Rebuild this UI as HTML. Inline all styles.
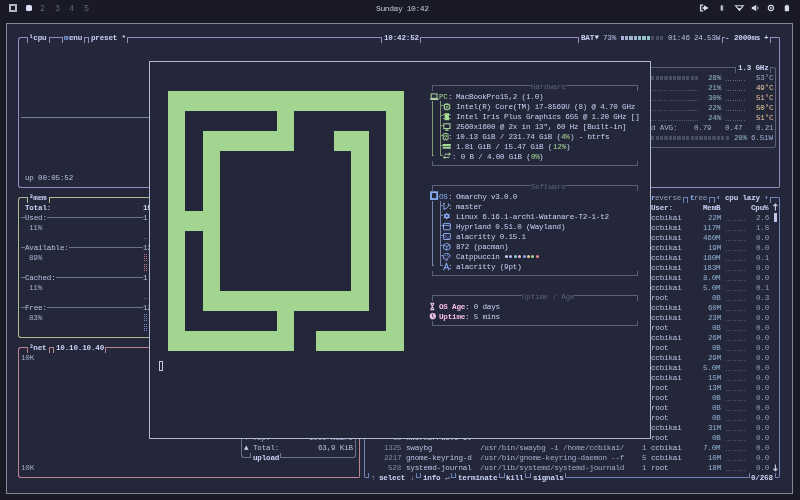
<!DOCTYPE html>
<html><head><meta charset="utf-8"><style>
html,body{margin:0;padding:0;}
body{-webkit-font-smoothing:antialiased;width:800px;height:500px;overflow:hidden;position:relative;background:#191a25;font-family:"Liberation Mono",monospace;}
.r,.h,.v,.t,.ic{position:absolute;}
.h{height:1px;}
.v{width:1px;}
.t{white-space:pre;will-change:transform;font-size:7.60px;line-height:10px;height:10px;letter-spacing:-0.186px;}
.b{font-weight:bold;}
</style></head><body>
<div class="r" style="left:9.00px;top:3.80px;width:8.20px;height:8.20px;background:transparent;box-sizing:border-box;border:2px solid #b4b6c4;"></div>
<div class="r" style="left:25.80px;top:4.90px;width:6.20px;height:6.00px;background:#dcdff5;border-radius:1.6px;"></div>
<div class="t" style="left:40.40px;top:3.6px;font-size:8.4px;color:#62667c">2</div>
<div class="t" style="left:54.90px;top:3.6px;font-size:8.4px;color:#62667c">3</div>
<div class="t" style="left:69.40px;top:3.6px;font-size:8.4px;color:#62667c">4</div>
<div class="t" style="left:83.90px;top:3.6px;font-size:8.4px;color:#62667c">5</div>
<div class="t" style="left:376.2px;top:3.6px;font-size:8px;letter-spacing:-0.425px;color:#c8ccdc">Sunday 10:42</div>
<div class="r" style="left:6.00px;top:23.00px;width:787.00px;height:471.00px;background:#24273a;box-sizing:border-box;border:1px solid #85879a;"></div>
<div class="r" style="box-sizing:border-box;left:17.99px;top:37.00px;width:2.69px;height:5.50px;border-left:1px solid #9a8cc2;border-top:1px solid #9a8cc2;border-top-left-radius:3px"></div>
<div class="r" style="box-sizing:border-box;left:777.55px;top:37.00px;width:2.69px;height:5.50px;border-right:1px solid #9a8cc2;border-top:1px solid #9a8cc2;border-top-right-radius:3px"></div>
<div class="r" style="box-sizing:border-box;left:17.99px;top:182.50px;width:2.69px;height:5.50px;border-left:1px solid #9a8cc2;border-bottom:1px solid #9a8cc2;border-bottom-left-radius:3px"></div>
<div class="r" style="box-sizing:border-box;left:777.55px;top:182.50px;width:2.69px;height:5.50px;border-right:1px solid #9a8cc2;border-bottom:1px solid #9a8cc2;border-bottom-right-radius:3px"></div>
<div class="r" style="box-sizing:border-box;left:455.49px;top:67.00px;width:2.69px;height:5.50px;border-left:1px solid #5b6078;border-top:1px solid #5b6078;border-top-left-radius:3px"></div>
<div class="r" style="box-sizing:border-box;left:773.17px;top:67.00px;width:2.69px;height:5.50px;border-right:1px solid #5b6078;border-top:1px solid #5b6078;border-top-right-radius:3px"></div>
<div class="r" style="box-sizing:border-box;left:455.49px;top:142.50px;width:2.69px;height:5.50px;border-left:1px solid #5b6078;border-bottom:1px solid #5b6078;border-bottom-left-radius:3px"></div>
<div class="r" style="box-sizing:border-box;left:773.17px;top:142.50px;width:2.69px;height:5.50px;border-right:1px solid #5b6078;border-bottom:1px solid #5b6078;border-bottom-right-radius:3px"></div>
<div class="r" style="box-sizing:border-box;left:17.99px;top:197.00px;width:2.69px;height:5.50px;border-left:1px solid #abba8f;border-top:1px solid #abba8f;border-top-left-radius:3px"></div>
<div class="r" style="box-sizing:border-box;left:191.30px;top:197.00px;width:2.69px;height:5.50px;border-right:1px solid #abba8f;border-top:1px solid #abba8f;border-top-right-radius:3px"></div>
<div class="r" style="box-sizing:border-box;left:17.99px;top:332.50px;width:2.69px;height:5.50px;border-left:1px solid #abba8f;border-bottom:1px solid #abba8f;border-bottom-left-radius:3px"></div>
<div class="r" style="box-sizing:border-box;left:191.30px;top:332.50px;width:2.69px;height:5.50px;border-right:1px solid #abba8f;border-bottom:1px solid #abba8f;border-bottom-right-radius:3px"></div>
<div class="r" style="box-sizing:border-box;left:17.99px;top:347.00px;width:2.69px;height:5.50px;border-left:1px solid #bd8592;border-top:1px solid #bd8592;border-top-left-radius:3px"></div>
<div class="r" style="box-sizing:border-box;left:357.55px;top:347.00px;width:2.69px;height:5.50px;border-right:1px solid #bd8592;border-top:1px solid #bd8592;border-top-right-radius:3px"></div>
<div class="r" style="box-sizing:border-box;left:17.99px;top:472.50px;width:2.69px;height:5.50px;border-left:1px solid #bd8592;border-bottom:1px solid #bd8592;border-bottom-left-radius:3px"></div>
<div class="r" style="box-sizing:border-box;left:357.55px;top:472.50px;width:2.69px;height:5.50px;border-right:1px solid #bd8592;border-bottom:1px solid #bd8592;border-bottom-right-radius:3px"></div>
<div class="r" style="box-sizing:border-box;left:241.11px;top:377.00px;width:2.69px;height:5.50px;border-left:1px solid #6e738d;border-top:1px solid #6e738d;border-top-left-radius:3px"></div>
<div class="r" style="box-sizing:border-box;left:353.18px;top:377.00px;width:2.69px;height:5.50px;border-right:1px solid #6e738d;border-top:1px solid #6e738d;border-top-right-radius:3px"></div>
<div class="r" style="box-sizing:border-box;left:241.11px;top:452.50px;width:2.69px;height:5.50px;border-left:1px solid #6e738d;border-bottom:1px solid #6e738d;border-bottom-left-radius:3px"></div>
<div class="r" style="box-sizing:border-box;left:353.18px;top:452.50px;width:2.69px;height:5.50px;border-right:1px solid #6e738d;border-bottom:1px solid #6e738d;border-bottom-right-radius:3px"></div>
<div class="r" style="box-sizing:border-box;left:363.61px;top:197.00px;width:2.69px;height:5.50px;border-left:1px solid #6f84bb;border-top:1px solid #6f84bb;border-top-left-radius:3px"></div>
<div class="r" style="box-sizing:border-box;left:777.55px;top:197.00px;width:2.69px;height:5.50px;border-right:1px solid #6f84bb;border-top:1px solid #6f84bb;border-top-right-radius:3px"></div>
<div class="r" style="box-sizing:border-box;left:363.61px;top:472.50px;width:2.69px;height:5.50px;border-left:1px solid #6f84bb;border-bottom:1px solid #6f84bb;border-bottom-left-radius:3px"></div>
<div class="r" style="box-sizing:border-box;left:777.55px;top:472.50px;width:2.69px;height:5.50px;border-right:1px solid #6f84bb;border-bottom:1px solid #6f84bb;border-bottom-right-radius:3px"></div>
<div class="h" style="left:20.68px;top:37.00px;width:7.06px;background:#9a8cc2"></div>
<div class="h" style="left:48.61px;top:37.00px;width:14.12px;background:#9a8cc2"></div>
<div class="h" style="left:83.61px;top:37.00px;width:5.38px;background:#9a8cc2"></div>
<div class="h" style="left:127.36px;top:37.00px;width:254.75px;background:#9a8cc2"></div>
<div class="h" style="left:420.49px;top:37.00px;width:158.50px;background:#9a8cc2"></div>
<div class="h" style="left:722.36px;top:37.00px;width:2.69px;background:#9a8cc2"></div>
<div class="h" style="left:770.49px;top:37.00px;width:7.06px;background:#9a8cc2"></div>
<div class="h" style="left:20.68px;top:187.00px;width:756.88px;background:#9a8cc2"></div>
<div class="h" style="left:20.68px;top:117.00px;width:175.00px;background:#7a7f9a"></div>
<div class="h" style="left:458.18px;top:67.00px;width:278.31px;background:#5b6078"></div>
<div class="h" style="left:770.49px;top:67.00px;width:2.69px;background:#5b6078"></div>
<div class="h" style="left:458.18px;top:147.00px;width:315.00px;background:#5b6078"></div>
<div class="h" style="left:20.68px;top:197.00px;width:7.06px;background:#abba8f"></div>
<div class="h" style="left:48.61px;top:197.00px;width:142.69px;background:#abba8f"></div>
<div class="h" style="left:20.68px;top:337.00px;width:170.62px;background:#abba8f"></div>
<div class="h" style="left:20.68px;top:217.00px;width:4.38px;background:#6e738d"></div>
<div class="h" style="left:46.92px;top:217.00px;width:96.25px;background:#6e738d"></div>
<div class="h" style="left:20.68px;top:247.00px;width:4.38px;background:#6e738d"></div>
<div class="h" style="left:68.80px;top:247.00px;width:74.38px;background:#6e738d"></div>
<div class="h" style="left:20.68px;top:277.00px;width:4.38px;background:#6e738d"></div>
<div class="h" style="left:55.67px;top:277.00px;width:87.50px;background:#6e738d"></div>
<div class="h" style="left:20.68px;top:307.00px;width:4.38px;background:#6e738d"></div>
<div class="h" style="left:46.92px;top:307.00px;width:96.25px;background:#6e738d"></div>
<div class="h" style="left:20.68px;top:347.00px;width:7.06px;background:#bd8592"></div>
<div class="h" style="left:48.61px;top:347.00px;width:5.38px;background:#bd8592"></div>
<div class="h" style="left:105.49px;top:347.00px;width:252.06px;background:#bd8592"></div>
<div class="h" style="left:20.68px;top:477.00px;width:336.88px;background:#bd8592"></div>
<div class="h" style="left:243.80px;top:377.00px;width:109.38px;background:#6e738d"></div>
<div class="h" style="left:243.80px;top:457.00px;width:7.06px;background:#6e738d"></div>
<div class="h" style="left:280.49px;top:457.00px;width:72.69px;background:#6e738d"></div>
<div class="h" style="left:366.30px;top:197.00px;width:282.69px;background:#6f84bb"></div>
<div class="h" style="left:682.99px;top:197.00px;width:5.38px;background:#6f84bb"></div>
<div class="h" style="left:709.24px;top:197.00px;width:5.38px;background:#6f84bb"></div>
<div class="h" style="left:770.49px;top:197.00px;width:7.06px;background:#6f84bb"></div>
<div class="h" style="left:366.30px;top:477.00px;width:2.69px;background:#6f84bb"></div>
<div class="h" style="left:416.11px;top:477.00px;width:5.38px;background:#6f84bb"></div>
<div class="h" style="left:451.11px;top:477.00px;width:5.38px;background:#6f84bb"></div>
<div class="h" style="left:499.24px;top:477.00px;width:5.38px;background:#6f84bb"></div>
<div class="h" style="left:525.49px;top:477.00px;width:5.38px;background:#6f84bb"></div>
<div class="h" style="left:564.86px;top:477.00px;width:184.75px;background:#6f84bb"></div>
<div class="h" style="left:774.86px;top:477.00px;width:2.69px;background:#6f84bb"></div>
<div class="v" style="left:26.74px;top:37.00px;height:5.50px;background:#9a8cc2"></div>
<div class="v" style="left:48.61px;top:37.00px;height:5.50px;background:#9a8cc2"></div>
<div class="v" style="left:61.74px;top:37.00px;height:5.50px;background:#9a8cc2"></div>
<div class="v" style="left:83.61px;top:37.00px;height:5.50px;background:#9a8cc2"></div>
<div class="v" style="left:87.99px;top:37.00px;height:5.50px;background:#9a8cc2"></div>
<div class="v" style="left:127.36px;top:37.00px;height:5.50px;background:#9a8cc2"></div>
<div class="v" style="left:381.11px;top:37.00px;height:5.50px;background:#9a8cc2"></div>
<div class="v" style="left:420.49px;top:37.00px;height:5.50px;background:#9a8cc2"></div>
<div class="v" style="left:577.99px;top:37.00px;height:5.50px;background:#9a8cc2"></div>
<div class="v" style="left:722.36px;top:37.00px;height:5.50px;background:#9a8cc2"></div>
<div class="v" style="left:770.49px;top:37.00px;height:5.50px;background:#9a8cc2"></div>
<div class="v" style="left:17.99px;top:42.50px;height:140.00px;background:#9a8cc2"></div>
<div class="v" style="left:779.24px;top:42.50px;height:140.00px;background:#9a8cc2"></div>
<div class="v" style="left:735.49px;top:67.00px;height:5.50px;background:#5b6078"></div>
<div class="v" style="left:770.49px;top:67.00px;height:5.50px;background:#5b6078"></div>
<div class="v" style="left:455.49px;top:72.50px;height:70.00px;background:#5b6078"></div>
<div class="v" style="left:774.86px;top:72.50px;height:70.00px;background:#5b6078"></div>
<div class="v" style="left:26.74px;top:197.00px;height:5.50px;background:#abba8f"></div>
<div class="v" style="left:48.61px;top:197.00px;height:5.50px;background:#abba8f"></div>
<div class="v" style="left:17.99px;top:202.50px;height:130.00px;background:#abba8f"></div>
<div class="v" style="left:192.99px;top:202.50px;height:130.00px;background:#abba8f"></div>
<div class="v" style="left:26.74px;top:347.00px;height:5.50px;background:#bd8592"></div>
<div class="v" style="left:48.61px;top:347.00px;height:5.50px;background:#bd8592"></div>
<div class="v" style="left:52.99px;top:347.00px;height:5.50px;background:#bd8592"></div>
<div class="v" style="left:105.49px;top:347.00px;height:5.50px;background:#bd8592"></div>
<div class="v" style="left:17.99px;top:352.50px;height:120.00px;background:#bd8592"></div>
<div class="v" style="left:359.24px;top:352.50px;height:120.00px;background:#bd8592"></div>
<div class="v" style="left:249.86px;top:452.50px;height:5.50px;background:#6e738d"></div>
<div class="v" style="left:280.49px;top:452.50px;height:5.50px;background:#6e738d"></div>
<div class="v" style="left:241.11px;top:382.50px;height:70.00px;background:#6e738d"></div>
<div class="v" style="left:354.86px;top:382.50px;height:70.00px;background:#6e738d"></div>
<div class="v" style="left:647.99px;top:197.00px;height:5.50px;background:#6f84bb"></div>
<div class="v" style="left:770.49px;top:197.00px;height:5.50px;background:#6f84bb"></div>
<div class="v" style="left:367.99px;top:472.50px;height:5.50px;background:#6f84bb"></div>
<div class="v" style="left:416.11px;top:472.50px;height:5.50px;background:#6f84bb"></div>
<div class="v" style="left:420.49px;top:472.50px;height:5.50px;background:#6f84bb"></div>
<div class="v" style="left:451.11px;top:472.50px;height:5.50px;background:#6f84bb"></div>
<div class="v" style="left:455.49px;top:472.50px;height:5.50px;background:#6f84bb"></div>
<div class="v" style="left:499.24px;top:472.50px;height:5.50px;background:#6f84bb"></div>
<div class="v" style="left:503.61px;top:472.50px;height:5.50px;background:#6f84bb"></div>
<div class="v" style="left:525.49px;top:472.50px;height:5.50px;background:#6f84bb"></div>
<div class="v" style="left:529.86px;top:472.50px;height:5.50px;background:#6f84bb"></div>
<div class="v" style="left:564.86px;top:472.50px;height:5.50px;background:#6f84bb"></div>
<div class="v" style="left:748.61px;top:472.50px;height:5.50px;background:#6f84bb"></div>
<div class="v" style="left:774.86px;top:472.50px;height:5.50px;background:#6f84bb"></div>
<div class="v" style="left:363.61px;top:202.50px;height:270.00px;background:#6f84bb"></div>
<div class="v" style="left:779.24px;top:202.50px;height:270.00px;background:#6f84bb"></div>
<div class="v" style="left:682.99px;top:197.00px;height:5.50px;background:#6f84bb"></div>
<div class="v" style="left:687.36px;top:197.00px;height:5.50px;background:#6f84bb"></div>
<div class="v" style="left:709.24px;top:197.00px;height:5.50px;background:#6f84bb"></div>
<div class="v" style="left:713.61px;top:197.00px;height:5.50px;background:#6f84bb"></div>
<div class="t b" style="left:29.43px;top:32.85px;color:#cad3f5">¹cpu</div>
<div class="t b" style="left:64.42px;top:32.85px;color:#8aadf4">m</div>
<div class="t b" style="left:68.80px;top:32.85px;color:#cad3f5">enu</div>
<div class="t b" style="left:90.67px;top:32.85px;color:#cad3f5">preset *</div>
<div class="t b" style="left:383.80px;top:32.85px;color:#cad3f5">10:42:52</div>
<div class="t b" style="left:580.67px;top:32.85px;color:#cad3f5">BAT</div>
<div class="t" style="left:602.55px;top:32.85px;color:#b8c0e0">73%</div>
<div class="t" style="left:668.17px;top:32.85px;color:#b8c0e0">01:46</div>
<div class="t" style="left:694.42px;top:32.85px;color:#b8c0e0">24.53W</div>
<div class="t b" style="left:725.05px;top:32.85px;color:#b8c0e0">-</div>
<div class="t b" style="left:733.80px;top:32.85px;color:#cad3f5">2000ms</div>
<div class="t b" style="left:764.42px;top:32.85px;color:#cad3f5">+</div>
<div class="t" style="left:25.05px;top:172.85px;color:#b8c0e0">up 00:05:52</div>
<div class="t b" style="left:738.17px;top:62.85px;color:#cad3f5">1.3 GHz</div>
<div class="t" style="left:707.55px;top:72.85px;color:#8fb6c4">28%</div>
<div class="t" style="left:755.67px;top:72.85px;color:#a5adcb">53°C</div>
<div class="t" style="left:707.55px;top:82.85px;color:#8fb6c4">21%</div>
<div class="t" style="left:755.67px;top:82.85px;color:#eed49f">49°C</div>
<div class="t" style="left:707.55px;top:92.85px;color:#8fb6c4">30%</div>
<div class="t" style="left:755.67px;top:92.85px;color:#e6c79a">51°C</div>
<div class="t" style="left:707.55px;top:102.85px;color:#8fb6c4">22%</div>
<div class="t" style="left:755.67px;top:102.85px;color:#eed49f">50°C</div>
<div class="t" style="left:707.55px;top:112.85px;color:#8fb6c4">24%</div>
<div class="t" style="left:755.67px;top:112.85px;color:#e6c79a">51°C</div>
<div class="t" style="left:637.55px;top:122.85px;color:#a5adcb">Load AVG:</div>
<div class="t" style="left:694.42px;top:122.85px;color:#a5adcb">0.79</div>
<div class="t" style="left:725.05px;top:122.85px;color:#a5adcb">0.47</div>
<div class="t" style="left:755.67px;top:122.85px;color:#a5adcb">0.21</div>
<div class="t" style="left:733.80px;top:132.85px;color:#8fb6c4">28%</div>
<div class="t" style="left:751.30px;top:132.85px;color:#9fb0d8">6.51W</div>
<div class="t b" style="left:29.43px;top:192.85px;color:#cad3f5">²mem</div>
<div class="t b" style="left:25.05px;top:202.85px;color:#cad3f5">Total:</div>
<div class="t b" style="left:143.18px;top:202.85px;color:#cad3f5">15.47 GiB</div>
<div class="t" style="left:25.05px;top:212.85px;color:#b8c0e0">Used:</div>
<div class="t" style="left:143.18px;top:212.85px;color:#b8c0e0">1.81 GiB</div>
<div class="t" style="left:29.43px;top:222.85px;color:#a5adcb">11%</div>
<div class="t" style="left:25.05px;top:242.85px;color:#b8c0e0">Available:</div>
<div class="t" style="left:143.18px;top:242.85px;color:#b8c0e0">13.6 GiB</div>
<div class="t" style="left:29.43px;top:252.85px;color:#a5adcb">89%</div>
<div class="t" style="left:25.05px;top:272.85px;color:#b8c0e0">Cached:</div>
<div class="t" style="left:143.18px;top:272.85px;color:#b8c0e0">1.81 GiB</div>
<div class="t" style="left:29.43px;top:282.85px;color:#a5adcb">11%</div>
<div class="t" style="left:25.05px;top:302.85px;color:#b8c0e0">Free:</div>
<div class="t" style="left:143.18px;top:302.85px;color:#b8c0e0">12.8 GiB</div>
<div class="t" style="left:29.43px;top:312.85px;color:#a5adcb">83%</div>
<div class="t b" style="left:29.43px;top:342.85px;color:#cad3f5">³net</div>
<div class="t b" style="left:55.67px;top:342.85px;color:#cad3f5">10.10.10.40</div>
<div class="t" style="left:20.68px;top:352.85px;color:#a5adcb">10K</div>
<div class="t" style="left:20.68px;top:462.85px;color:#a5adcb">10K</div>
<div class="t" style="left:243.80px;top:432.85px;color:#a5adcb">▼ Top:</div>
<div class="t" style="left:309.43px;top:432.85px;color:#a5adcb">1000 KiB/s</div>
<div class="t" style="left:243.80px;top:442.85px;color:#cad3f5">▲</div>
<div class="t" style="left:252.55px;top:442.85px;color:#b8c0e0">Total:</div>
<div class="t" style="left:318.18px;top:442.85px;color:#b8c0e0">63,9 KiB</div>
<div class="t b" style="left:252.55px;top:452.85px;color:#cad3f5">upload</div>
<div class="t b" style="left:650.67px;top:192.85px;color:#8aadf4">r</div>
<div class="t" style="left:655.05px;top:192.85px;color:#939ab7">everse</div>
<div class="t b" style="left:690.05px;top:192.85px;color:#8aadf4">t</div>
<div class="t" style="left:694.42px;top:192.85px;color:#939ab7">ree</div>
<div class="t b" style="left:716.30px;top:192.85px;color:#8aadf4">‹</div>
<div class="t b" style="left:725.05px;top:192.85px;color:#cad3f5">cpu lazy</div>
<div class="t b" style="left:764.42px;top:192.85px;color:#8aadf4">›</div>
<div class="t b" style="left:650.67px;top:202.85px;color:#cad3f5">User:</div>
<div class="t b" style="left:703.17px;top:202.85px;color:#cad3f5">MemB</div>
<div class="t b" style="left:751.30px;top:202.85px;color:#cad3f5">Cpu%</div>
<div class="t" style="left:650.67px;top:212.85px;color:#b8c0e0">ccbikai</div>
<div class="t" style="left:707.55px;top:212.85px;color:#8fb0d0">22M</div>
<div class="t" style="left:755.67px;top:212.85px;color:#939ab7">2.6</div>
<div class="t" style="left:650.67px;top:222.85px;color:#b8c0e0">ccbikai</div>
<div class="t" style="left:703.17px;top:222.85px;color:#8fb0d0">117M</div>
<div class="t" style="left:755.67px;top:222.85px;color:#939ab7">1.8</div>
<div class="t" style="left:650.67px;top:232.85px;color:#b8c0e0">ccbikai</div>
<div class="t" style="left:703.17px;top:232.85px;color:#8fb0d0">460M</div>
<div class="t" style="left:755.67px;top:232.85px;color:#939ab7">0.0</div>
<div class="t" style="left:650.67px;top:242.85px;color:#b8c0e0">ccbikai</div>
<div class="t" style="left:707.55px;top:242.85px;color:#8fb0d0">19M</div>
<div class="t" style="left:755.67px;top:242.85px;color:#939ab7">0.0</div>
<div class="t" style="left:650.67px;top:252.85px;color:#b8c0e0">ccbikai</div>
<div class="t" style="left:703.17px;top:252.85px;color:#8fb0d0">180M</div>
<div class="t" style="left:755.67px;top:252.85px;color:#939ab7">0.1</div>
<div class="t" style="left:650.67px;top:262.85px;color:#b8c0e0">ccbikai</div>
<div class="t" style="left:703.17px;top:262.85px;color:#8fb0d0">183M</div>
<div class="t" style="left:755.67px;top:262.85px;color:#939ab7">0.0</div>
<div class="t" style="left:650.67px;top:272.85px;color:#b8c0e0">ccbikai</div>
<div class="t" style="left:703.17px;top:272.85px;color:#8fb0d0">8.0M</div>
<div class="t" style="left:755.67px;top:272.85px;color:#939ab7">0.0</div>
<div class="t" style="left:650.67px;top:282.85px;color:#b8c0e0">ccbikai</div>
<div class="t" style="left:703.17px;top:282.85px;color:#8fb0d0">5.0M</div>
<div class="t" style="left:755.67px;top:282.85px;color:#939ab7">0.1</div>
<div class="t" style="left:650.67px;top:292.85px;color:#b8c0e0">root</div>
<div class="t" style="left:711.92px;top:292.85px;color:#8fb0d0">0B</div>
<div class="t" style="left:755.67px;top:292.85px;color:#939ab7">0.3</div>
<div class="t" style="left:650.67px;top:302.85px;color:#b8c0e0">ccbikai</div>
<div class="t" style="left:707.55px;top:302.85px;color:#8fb0d0">60M</div>
<div class="t" style="left:755.67px;top:302.85px;color:#939ab7">0.0</div>
<div class="t" style="left:650.67px;top:312.85px;color:#b8c0e0">ccbikai</div>
<div class="t" style="left:707.55px;top:312.85px;color:#8fb0d0">23M</div>
<div class="t" style="left:755.67px;top:312.85px;color:#939ab7">0.0</div>
<div class="t" style="left:650.67px;top:322.85px;color:#b8c0e0">root</div>
<div class="t" style="left:711.92px;top:322.85px;color:#8fb0d0">0B</div>
<div class="t" style="left:755.67px;top:322.85px;color:#939ab7">0.0</div>
<div class="t" style="left:650.67px;top:332.85px;color:#b8c0e0">ccbikai</div>
<div class="t" style="left:707.55px;top:332.85px;color:#8fb0d0">26M</div>
<div class="t" style="left:755.67px;top:332.85px;color:#939ab7">0.0</div>
<div class="t" style="left:650.67px;top:342.85px;color:#b8c0e0">root</div>
<div class="t" style="left:711.92px;top:342.85px;color:#8fb0d0">0B</div>
<div class="t" style="left:755.67px;top:342.85px;color:#939ab7">0.0</div>
<div class="t" style="left:650.67px;top:352.85px;color:#b8c0e0">ccbikai</div>
<div class="t" style="left:707.55px;top:352.85px;color:#8fb0d0">29M</div>
<div class="t" style="left:755.67px;top:352.85px;color:#939ab7">0.0</div>
<div class="t" style="left:650.67px;top:362.85px;color:#b8c0e0">ccbikai</div>
<div class="t" style="left:703.17px;top:362.85px;color:#8fb0d0">5.0M</div>
<div class="t" style="left:755.67px;top:362.85px;color:#939ab7">0.0</div>
<div class="t" style="left:650.67px;top:372.85px;color:#b8c0e0">ccbikai</div>
<div class="t" style="left:707.55px;top:372.85px;color:#8fb0d0">15M</div>
<div class="t" style="left:755.67px;top:372.85px;color:#939ab7">0.0</div>
<div class="t" style="left:650.67px;top:382.85px;color:#b8c0e0">root</div>
<div class="t" style="left:707.55px;top:382.85px;color:#8fb0d0">13M</div>
<div class="t" style="left:755.67px;top:382.85px;color:#939ab7">0.0</div>
<div class="t" style="left:650.67px;top:392.85px;color:#b8c0e0">root</div>
<div class="t" style="left:711.92px;top:392.85px;color:#8fb0d0">0B</div>
<div class="t" style="left:755.67px;top:392.85px;color:#939ab7">0.0</div>
<div class="t" style="left:650.67px;top:402.85px;color:#b8c0e0">root</div>
<div class="t" style="left:711.92px;top:402.85px;color:#8fb0d0">0B</div>
<div class="t" style="left:755.67px;top:402.85px;color:#939ab7">0.0</div>
<div class="t" style="left:650.67px;top:412.85px;color:#b8c0e0">root</div>
<div class="t" style="left:711.92px;top:412.85px;color:#8fb0d0">0B</div>
<div class="t" style="left:755.67px;top:412.85px;color:#939ab7">0.0</div>
<div class="t" style="left:650.67px;top:422.85px;color:#b8c0e0">ccbikai</div>
<div class="t" style="left:707.55px;top:422.85px;color:#8fb0d0">31M</div>
<div class="t" style="left:755.67px;top:422.85px;color:#939ab7">0.0</div>
<div class="t" style="left:650.67px;top:432.85px;color:#b8c0e0">root</div>
<div class="t" style="left:711.92px;top:432.85px;color:#8fb0d0">0B</div>
<div class="t" style="left:755.67px;top:432.85px;color:#939ab7">0.0</div>
<div class="t" style="left:650.67px;top:442.85px;color:#b8c0e0">ccbikai</div>
<div class="t" style="left:703.17px;top:442.85px;color:#8fb0d0">7.0M</div>
<div class="t" style="left:755.67px;top:442.85px;color:#939ab7">0.0</div>
<div class="t" style="left:650.67px;top:452.85px;color:#b8c0e0">ccbikai</div>
<div class="t" style="left:707.55px;top:452.85px;color:#8fb0d0">10M</div>
<div class="t" style="left:755.67px;top:452.85px;color:#939ab7">0.0</div>
<div class="t" style="left:650.67px;top:462.85px;color:#b8c0e0">root</div>
<div class="t" style="left:707.55px;top:462.85px;color:#8fb0d0">18M</div>
<div class="t" style="left:755.67px;top:462.85px;color:#939ab7">0.0</div>
<div class="t" style="left:392.55px;top:432.85px;color:#8087a2">12</div>
<div class="t" style="left:405.68px;top:432.85px;color:#b8c0e0">kworker/u8:0-ev</div>
<div class="t" style="left:383.80px;top:442.85px;color:#8087a2">1325</div>
<div class="t" style="left:405.68px;top:442.85px;color:#b8c0e0">swaybg</div>
<div class="t" style="left:480.05px;top:442.85px;color:#a5adcb">/usr/bin/swaybg -i /home/ccbikai/</div>
<div class="t" style="left:641.92px;top:442.85px;color:#a5adcb">1</div>
<div class="t" style="left:383.80px;top:452.85px;color:#8087a2">2217</div>
<div class="t" style="left:405.68px;top:452.85px;color:#b8c0e0">gnome-keyring-d</div>
<div class="t" style="left:480.05px;top:452.85px;color:#a5adcb">/usr/bin/gnome-keyring-daemon --f</div>
<div class="t" style="left:641.92px;top:452.85px;color:#a5adcb">5</div>
<div class="t" style="left:388.18px;top:462.85px;color:#8087a2">528</div>
<div class="t" style="left:405.68px;top:462.85px;color:#b8c0e0">systemd-journal</div>
<div class="t" style="left:480.05px;top:462.85px;color:#a5adcb">/usr/lib/systemd/systemd-journald</div>
<div class="t" style="left:641.92px;top:462.85px;color:#a5adcb">1</div>
<div class="t b" style="left:370.68px;top:472.85px;color:#a5adcb">↑</div>
<div class="t b" style="left:379.43px;top:472.85px;color:#cad3f5">select</div>
<div class="t b" style="left:410.05px;top:472.85px;color:#a5adcb">↓</div>
<div class="t b" style="left:423.18px;top:472.85px;color:#cad3f5">info</div>
<div class="t" style="left:445.05px;top:472.85px;color:#a5adcb">↵</div>
<div class="t b" style="left:458.18px;top:472.85px;color:#cad3f5">terminate</div>
<div class="t b" style="left:506.30px;top:472.85px;color:#cad3f5">kill</div>
<div class="t b" style="left:532.55px;top:472.85px;color:#cad3f5">signals</div>
<div class="t b" style="left:751.30px;top:472.85px;color:#cad3f5">0/268</div>
<div class="r" style="left:620.55px;top:35.80px;width:3.30px;height:3.80px;background:#aab0d8;"></div>
<div class="r" style="left:624.92px;top:35.80px;width:3.30px;height:3.80px;background:#a4b2d6;"></div>
<div class="r" style="left:629.30px;top:35.80px;width:3.30px;height:3.80px;background:#9eb6d4;"></div>
<div class="r" style="left:633.67px;top:35.80px;width:3.30px;height:3.80px;background:#98bad0;"></div>
<div class="r" style="left:638.05px;top:35.80px;width:3.30px;height:3.80px;background:#93becc;"></div>
<div class="r" style="left:642.42px;top:35.80px;width:3.30px;height:3.80px;background:#8fc2c9;"></div>
<div class="r" style="left:646.80px;top:35.80px;width:3.30px;height:3.80px;background:#8cc6c6;"></div>
<div class="r" style="left:651.17px;top:35.80px;width:3.30px;height:3.80px;background:#494d64;"></div>
<div class="r" style="left:655.55px;top:35.80px;width:3.30px;height:3.80px;background:#494d64;"></div>
<div class="r" style="left:659.92px;top:35.80px;width:3.30px;height:3.80px;background:#494d64;"></div>
<div class="r" style="left:454.30px;top:75.80px;width:3.30px;height:3.80px;background:#494d64;"></div>
<div class="r" style="left:458.68px;top:75.80px;width:3.30px;height:3.80px;background:#494d64;"></div>
<div class="r" style="left:463.05px;top:75.80px;width:3.30px;height:3.80px;background:#494d64;"></div>
<div class="r" style="left:467.43px;top:75.80px;width:3.30px;height:3.80px;background:#494d64;"></div>
<div class="r" style="left:471.80px;top:75.80px;width:3.30px;height:3.80px;background:#494d64;"></div>
<div class="r" style="left:476.18px;top:75.80px;width:3.30px;height:3.80px;background:#494d64;"></div>
<div class="r" style="left:480.55px;top:75.80px;width:3.30px;height:3.80px;background:#494d64;"></div>
<div class="r" style="left:484.93px;top:75.80px;width:3.30px;height:3.80px;background:#494d64;"></div>
<div class="r" style="left:489.30px;top:75.80px;width:3.30px;height:3.80px;background:#494d64;"></div>
<div class="r" style="left:493.68px;top:75.80px;width:3.30px;height:3.80px;background:#494d64;"></div>
<div class="r" style="left:498.05px;top:75.80px;width:3.30px;height:3.80px;background:#494d64;"></div>
<div class="r" style="left:502.43px;top:75.80px;width:3.30px;height:3.80px;background:#494d64;"></div>
<div class="r" style="left:506.80px;top:75.80px;width:3.30px;height:3.80px;background:#494d64;"></div>
<div class="r" style="left:511.18px;top:75.80px;width:3.30px;height:3.80px;background:#494d64;"></div>
<div class="r" style="left:515.55px;top:75.80px;width:3.30px;height:3.80px;background:#494d64;"></div>
<div class="r" style="left:519.92px;top:75.80px;width:3.30px;height:3.80px;background:#494d64;"></div>
<div class="r" style="left:524.30px;top:75.80px;width:3.30px;height:3.80px;background:#494d64;"></div>
<div class="r" style="left:528.67px;top:75.80px;width:3.30px;height:3.80px;background:#494d64;"></div>
<div class="r" style="left:533.05px;top:75.80px;width:3.30px;height:3.80px;background:#494d64;"></div>
<div class="r" style="left:537.42px;top:75.80px;width:3.30px;height:3.80px;background:#494d64;"></div>
<div class="r" style="left:541.80px;top:75.80px;width:3.30px;height:3.80px;background:#494d64;"></div>
<div class="r" style="left:546.17px;top:75.80px;width:3.30px;height:3.80px;background:#494d64;"></div>
<div class="r" style="left:550.55px;top:75.80px;width:3.30px;height:3.80px;background:#494d64;"></div>
<div class="r" style="left:554.92px;top:75.80px;width:3.30px;height:3.80px;background:#494d64;"></div>
<div class="r" style="left:559.30px;top:75.80px;width:3.30px;height:3.80px;background:#494d64;"></div>
<div class="r" style="left:563.67px;top:75.80px;width:3.30px;height:3.80px;background:#494d64;"></div>
<div class="r" style="left:568.05px;top:75.80px;width:3.30px;height:3.80px;background:#494d64;"></div>
<div class="r" style="left:572.42px;top:75.80px;width:3.30px;height:3.80px;background:#494d64;"></div>
<div class="r" style="left:576.80px;top:75.80px;width:3.30px;height:3.80px;background:#494d64;"></div>
<div class="r" style="left:581.17px;top:75.80px;width:3.30px;height:3.80px;background:#494d64;"></div>
<div class="r" style="left:585.55px;top:75.80px;width:3.30px;height:3.80px;background:#494d64;"></div>
<div class="r" style="left:589.92px;top:75.80px;width:3.30px;height:3.80px;background:#494d64;"></div>
<div class="r" style="left:594.30px;top:75.80px;width:3.30px;height:3.80px;background:#494d64;"></div>
<div class="r" style="left:598.67px;top:75.80px;width:3.30px;height:3.80px;background:#494d64;"></div>
<div class="r" style="left:603.05px;top:75.80px;width:3.30px;height:3.80px;background:#494d64;"></div>
<div class="r" style="left:607.42px;top:75.80px;width:3.30px;height:3.80px;background:#494d64;"></div>
<div class="r" style="left:611.80px;top:75.80px;width:3.30px;height:3.80px;background:#494d64;"></div>
<div class="r" style="left:616.17px;top:75.80px;width:3.30px;height:3.80px;background:#494d64;"></div>
<div class="r" style="left:620.55px;top:75.80px;width:3.30px;height:3.80px;background:#494d64;"></div>
<div class="r" style="left:624.92px;top:75.80px;width:3.30px;height:3.80px;background:#494d64;"></div>
<div class="r" style="left:629.30px;top:75.80px;width:3.30px;height:3.80px;background:#494d64;"></div>
<div class="r" style="left:633.67px;top:75.80px;width:3.30px;height:3.80px;background:#494d64;"></div>
<div class="r" style="left:638.05px;top:75.80px;width:3.30px;height:3.80px;background:#494d64;"></div>
<div class="r" style="left:642.42px;top:75.80px;width:3.30px;height:3.80px;background:#494d64;"></div>
<div class="r" style="left:646.80px;top:75.80px;width:3.30px;height:3.80px;background:#494d64;"></div>
<div class="r" style="left:651.17px;top:75.80px;width:3.30px;height:3.80px;background:#494d64;"></div>
<div class="r" style="left:655.55px;top:75.80px;width:3.30px;height:3.80px;background:#494d64;"></div>
<div class="r" style="left:659.92px;top:75.80px;width:3.30px;height:3.80px;background:#494d64;"></div>
<div class="r" style="left:664.30px;top:75.80px;width:3.30px;height:3.80px;background:#494d64;"></div>
<div class="r" style="left:668.67px;top:75.80px;width:3.30px;height:3.80px;background:#494d64;"></div>
<div class="r" style="left:673.05px;top:75.80px;width:3.30px;height:3.80px;background:#494d64;"></div>
<div class="r" style="left:677.42px;top:75.80px;width:3.30px;height:3.80px;background:#494d64;"></div>
<div class="r" style="left:681.80px;top:75.80px;width:3.30px;height:3.80px;background:#494d64;"></div>
<div class="r" style="left:686.17px;top:75.80px;width:3.30px;height:3.80px;background:#494d64;"></div>
<div class="r" style="left:690.55px;top:75.80px;width:3.30px;height:3.80px;background:#494d64;"></div>
<div class="r" style="left:694.92px;top:75.80px;width:3.30px;height:3.80px;background:#494d64;"></div>
<div class="r" style="left:454.30px;top:135.80px;width:3.30px;height:3.80px;background:#494d64;"></div>
<div class="r" style="left:458.68px;top:135.80px;width:3.30px;height:3.80px;background:#494d64;"></div>
<div class="r" style="left:463.05px;top:135.80px;width:3.30px;height:3.80px;background:#494d64;"></div>
<div class="r" style="left:467.43px;top:135.80px;width:3.30px;height:3.80px;background:#494d64;"></div>
<div class="r" style="left:471.80px;top:135.80px;width:3.30px;height:3.80px;background:#494d64;"></div>
<div class="r" style="left:476.18px;top:135.80px;width:3.30px;height:3.80px;background:#494d64;"></div>
<div class="r" style="left:480.55px;top:135.80px;width:3.30px;height:3.80px;background:#494d64;"></div>
<div class="r" style="left:484.93px;top:135.80px;width:3.30px;height:3.80px;background:#494d64;"></div>
<div class="r" style="left:489.30px;top:135.80px;width:3.30px;height:3.80px;background:#494d64;"></div>
<div class="r" style="left:493.68px;top:135.80px;width:3.30px;height:3.80px;background:#494d64;"></div>
<div class="r" style="left:498.05px;top:135.80px;width:3.30px;height:3.80px;background:#494d64;"></div>
<div class="r" style="left:502.43px;top:135.80px;width:3.30px;height:3.80px;background:#494d64;"></div>
<div class="r" style="left:506.80px;top:135.80px;width:3.30px;height:3.80px;background:#494d64;"></div>
<div class="r" style="left:511.18px;top:135.80px;width:3.30px;height:3.80px;background:#494d64;"></div>
<div class="r" style="left:515.55px;top:135.80px;width:3.30px;height:3.80px;background:#494d64;"></div>
<div class="r" style="left:519.92px;top:135.80px;width:3.30px;height:3.80px;background:#494d64;"></div>
<div class="r" style="left:524.30px;top:135.80px;width:3.30px;height:3.80px;background:#494d64;"></div>
<div class="r" style="left:528.67px;top:135.80px;width:3.30px;height:3.80px;background:#494d64;"></div>
<div class="r" style="left:533.05px;top:135.80px;width:3.30px;height:3.80px;background:#494d64;"></div>
<div class="r" style="left:537.42px;top:135.80px;width:3.30px;height:3.80px;background:#494d64;"></div>
<div class="r" style="left:541.80px;top:135.80px;width:3.30px;height:3.80px;background:#494d64;"></div>
<div class="r" style="left:546.17px;top:135.80px;width:3.30px;height:3.80px;background:#494d64;"></div>
<div class="r" style="left:550.55px;top:135.80px;width:3.30px;height:3.80px;background:#494d64;"></div>
<div class="r" style="left:554.92px;top:135.80px;width:3.30px;height:3.80px;background:#494d64;"></div>
<div class="r" style="left:559.30px;top:135.80px;width:3.30px;height:3.80px;background:#494d64;"></div>
<div class="r" style="left:563.67px;top:135.80px;width:3.30px;height:3.80px;background:#494d64;"></div>
<div class="r" style="left:568.05px;top:135.80px;width:3.30px;height:3.80px;background:#494d64;"></div>
<div class="r" style="left:572.42px;top:135.80px;width:3.30px;height:3.80px;background:#494d64;"></div>
<div class="r" style="left:576.80px;top:135.80px;width:3.30px;height:3.80px;background:#494d64;"></div>
<div class="r" style="left:581.17px;top:135.80px;width:3.30px;height:3.80px;background:#494d64;"></div>
<div class="r" style="left:585.55px;top:135.80px;width:3.30px;height:3.80px;background:#494d64;"></div>
<div class="r" style="left:589.92px;top:135.80px;width:3.30px;height:3.80px;background:#494d64;"></div>
<div class="r" style="left:594.30px;top:135.80px;width:3.30px;height:3.80px;background:#494d64;"></div>
<div class="r" style="left:598.67px;top:135.80px;width:3.30px;height:3.80px;background:#494d64;"></div>
<div class="r" style="left:603.05px;top:135.80px;width:3.30px;height:3.80px;background:#494d64;"></div>
<div class="r" style="left:607.42px;top:135.80px;width:3.30px;height:3.80px;background:#494d64;"></div>
<div class="r" style="left:611.80px;top:135.80px;width:3.30px;height:3.80px;background:#494d64;"></div>
<div class="r" style="left:616.17px;top:135.80px;width:3.30px;height:3.80px;background:#494d64;"></div>
<div class="r" style="left:620.55px;top:135.80px;width:3.30px;height:3.80px;background:#494d64;"></div>
<div class="r" style="left:624.92px;top:135.80px;width:3.30px;height:3.80px;background:#494d64;"></div>
<div class="r" style="left:629.30px;top:135.80px;width:3.30px;height:3.80px;background:#494d64;"></div>
<div class="r" style="left:633.67px;top:135.80px;width:3.30px;height:3.80px;background:#494d64;"></div>
<div class="r" style="left:638.05px;top:135.80px;width:3.30px;height:3.80px;background:#494d64;"></div>
<div class="r" style="left:642.42px;top:135.80px;width:3.30px;height:3.80px;background:#494d64;"></div>
<div class="r" style="left:646.80px;top:135.80px;width:3.30px;height:3.80px;background:#494d64;"></div>
<div class="r" style="left:651.17px;top:135.80px;width:3.30px;height:3.80px;background:#494d64;"></div>
<div class="r" style="left:655.55px;top:135.80px;width:3.30px;height:3.80px;background:#494d64;"></div>
<div class="r" style="left:659.92px;top:135.80px;width:3.30px;height:3.80px;background:#494d64;"></div>
<div class="r" style="left:664.30px;top:135.80px;width:3.30px;height:3.80px;background:#494d64;"></div>
<div class="r" style="left:668.67px;top:135.80px;width:3.30px;height:3.80px;background:#494d64;"></div>
<div class="r" style="left:673.05px;top:135.80px;width:3.30px;height:3.80px;background:#494d64;"></div>
<div class="r" style="left:677.42px;top:135.80px;width:3.30px;height:3.80px;background:#494d64;"></div>
<div class="r" style="left:681.80px;top:135.80px;width:3.30px;height:3.80px;background:#494d64;"></div>
<div class="r" style="left:686.17px;top:135.80px;width:3.30px;height:3.80px;background:#494d64;"></div>
<div class="r" style="left:690.55px;top:135.80px;width:3.30px;height:3.80px;background:#494d64;"></div>
<div class="r" style="left:694.92px;top:135.80px;width:3.30px;height:3.80px;background:#494d64;"></div>
<div class="r" style="left:699.30px;top:135.80px;width:3.30px;height:3.80px;background:#494d64;"></div>
<div class="r" style="left:703.67px;top:135.80px;width:3.30px;height:3.80px;background:#494d64;"></div>
<div class="r" style="left:708.05px;top:135.80px;width:3.30px;height:3.80px;background:#494d64;"></div>
<div class="r" style="left:712.42px;top:135.80px;width:3.30px;height:3.80px;background:#494d64;"></div>
<div class="r" style="left:716.80px;top:135.80px;width:3.30px;height:3.80px;background:#494d64;"></div>
<div class="r" style="left:721.17px;top:135.80px;width:3.30px;height:3.80px;background:#494d64;"></div>
<div class="r" style="left:725.55px;top:135.80px;width:3.30px;height:3.80px;background:#494d64;"></div>
<div class="r" style="left:725.65px;top:79.70px;width:20.68px;height:1px;background:repeating-linear-gradient(90deg,#6e738d 0 1.1px,transparent 1.1px 2.19px);opacity:.8"></div>
<div class="r" style="left:725.65px;top:89.70px;width:20.68px;height:1px;background:repeating-linear-gradient(90deg,#6e738d 0 1.1px,transparent 1.1px 2.19px);opacity:.8"></div>
<div class="r" style="left:725.65px;top:99.70px;width:20.68px;height:1px;background:repeating-linear-gradient(90deg,#6e738d 0 1.1px,transparent 1.1px 2.19px);opacity:.8"></div>
<div class="r" style="left:725.65px;top:109.70px;width:20.68px;height:1px;background:repeating-linear-gradient(90deg,#6e738d 0 1.1px,transparent 1.1px 2.19px);opacity:.8"></div>
<div class="r" style="left:725.65px;top:119.70px;width:20.68px;height:1px;background:repeating-linear-gradient(90deg,#6e738d 0 1.1px,transparent 1.1px 2.19px);opacity:.8"></div>
<div class="r" style="left:651.27px;top:89.70px;width:46.92px;height:1px;background:repeating-linear-gradient(90deg,#5b6078 0 1.1px,transparent 1.1px 2.19px);opacity:.8"></div>
<div class="r" style="left:651.27px;top:99.70px;width:46.92px;height:1px;background:repeating-linear-gradient(90deg,#5b6078 0 1.1px,transparent 1.1px 2.19px);opacity:.8"></div>
<div class="r" style="left:651.27px;top:109.70px;width:46.92px;height:1px;background:repeating-linear-gradient(90deg,#5b6078 0 1.1px,transparent 1.1px 2.19px);opacity:.8"></div>
<div class="r" style="left:651.27px;top:119.70px;width:46.92px;height:1px;background:repeating-linear-gradient(90deg,#5b6078 0 1.1px,transparent 1.1px 2.19px);opacity:.8"></div>
<div class="r" style="left:725.65px;top:219.70px;width:20.68px;height:1px;background:repeating-linear-gradient(90deg,#5b6078 0 1.1px,transparent 1.1px 2.19px);opacity:.8"></div>
<div class="r" style="left:725.65px;top:229.70px;width:20.68px;height:1px;background:repeating-linear-gradient(90deg,#5b6078 0 1.1px,transparent 1.1px 2.19px);opacity:.8"></div>
<div class="r" style="left:725.65px;top:239.70px;width:20.68px;height:1px;background:repeating-linear-gradient(90deg,#5b6078 0 1.1px,transparent 1.1px 2.19px);opacity:.8"></div>
<div class="r" style="left:725.65px;top:249.70px;width:20.68px;height:1px;background:repeating-linear-gradient(90deg,#5b6078 0 1.1px,transparent 1.1px 2.19px);opacity:.8"></div>
<div class="r" style="left:725.65px;top:259.70px;width:20.68px;height:1px;background:repeating-linear-gradient(90deg,#5b6078 0 1.1px,transparent 1.1px 2.19px);opacity:.8"></div>
<div class="r" style="left:725.65px;top:269.70px;width:20.68px;height:1px;background:repeating-linear-gradient(90deg,#5b6078 0 1.1px,transparent 1.1px 2.19px);opacity:.8"></div>
<div class="r" style="left:725.65px;top:279.70px;width:20.68px;height:1px;background:repeating-linear-gradient(90deg,#5b6078 0 1.1px,transparent 1.1px 2.19px);opacity:.8"></div>
<div class="r" style="left:725.65px;top:289.70px;width:20.68px;height:1px;background:repeating-linear-gradient(90deg,#5b6078 0 1.1px,transparent 1.1px 2.19px);opacity:.8"></div>
<div class="r" style="left:725.65px;top:299.70px;width:20.68px;height:1px;background:repeating-linear-gradient(90deg,#5b6078 0 1.1px,transparent 1.1px 2.19px);opacity:.8"></div>
<div class="r" style="left:725.65px;top:309.70px;width:20.68px;height:1px;background:repeating-linear-gradient(90deg,#5b6078 0 1.1px,transparent 1.1px 2.19px);opacity:.8"></div>
<div class="r" style="left:725.65px;top:319.70px;width:20.68px;height:1px;background:repeating-linear-gradient(90deg,#5b6078 0 1.1px,transparent 1.1px 2.19px);opacity:.8"></div>
<div class="r" style="left:725.65px;top:329.70px;width:20.68px;height:1px;background:repeating-linear-gradient(90deg,#5b6078 0 1.1px,transparent 1.1px 2.19px);opacity:.8"></div>
<div class="r" style="left:725.65px;top:339.70px;width:20.68px;height:1px;background:repeating-linear-gradient(90deg,#5b6078 0 1.1px,transparent 1.1px 2.19px);opacity:.8"></div>
<div class="r" style="left:725.65px;top:349.70px;width:20.68px;height:1px;background:repeating-linear-gradient(90deg,#5b6078 0 1.1px,transparent 1.1px 2.19px);opacity:.8"></div>
<div class="r" style="left:725.65px;top:359.70px;width:20.68px;height:1px;background:repeating-linear-gradient(90deg,#5b6078 0 1.1px,transparent 1.1px 2.19px);opacity:.8"></div>
<div class="r" style="left:725.65px;top:369.70px;width:20.68px;height:1px;background:repeating-linear-gradient(90deg,#5b6078 0 1.1px,transparent 1.1px 2.19px);opacity:.8"></div>
<div class="r" style="left:725.65px;top:379.70px;width:20.68px;height:1px;background:repeating-linear-gradient(90deg,#5b6078 0 1.1px,transparent 1.1px 2.19px);opacity:.8"></div>
<div class="r" style="left:725.65px;top:389.70px;width:20.68px;height:1px;background:repeating-linear-gradient(90deg,#5b6078 0 1.1px,transparent 1.1px 2.19px);opacity:.8"></div>
<div class="r" style="left:725.65px;top:399.70px;width:20.68px;height:1px;background:repeating-linear-gradient(90deg,#5b6078 0 1.1px,transparent 1.1px 2.19px);opacity:.8"></div>
<div class="r" style="left:725.65px;top:409.70px;width:20.68px;height:1px;background:repeating-linear-gradient(90deg,#5b6078 0 1.1px,transparent 1.1px 2.19px);opacity:.8"></div>
<div class="r" style="left:725.65px;top:419.70px;width:20.68px;height:1px;background:repeating-linear-gradient(90deg,#5b6078 0 1.1px,transparent 1.1px 2.19px);opacity:.8"></div>
<div class="r" style="left:725.65px;top:429.70px;width:20.68px;height:1px;background:repeating-linear-gradient(90deg,#5b6078 0 1.1px,transparent 1.1px 2.19px);opacity:.8"></div>
<div class="r" style="left:725.65px;top:439.70px;width:20.68px;height:1px;background:repeating-linear-gradient(90deg,#5b6078 0 1.1px,transparent 1.1px 2.19px);opacity:.8"></div>
<div class="r" style="left:725.65px;top:449.70px;width:20.68px;height:1px;background:repeating-linear-gradient(90deg,#5b6078 0 1.1px,transparent 1.1px 2.19px);opacity:.8"></div>
<div class="r" style="left:725.65px;top:459.70px;width:20.68px;height:1px;background:repeating-linear-gradient(90deg,#5b6078 0 1.1px,transparent 1.1px 2.19px);opacity:.8"></div>
<div class="r" style="left:725.65px;top:469.70px;width:20.68px;height:1px;background:repeating-linear-gradient(90deg,#5b6078 0 1.1px,transparent 1.1px 2.19px);opacity:.8"></div>
<div class="r" style="left:143.78px;top:238.00px;width:3.17px;height:1px;background:repeating-linear-gradient(90deg,#6e738d 0 1.1px,transparent 1.1px 2.19px);opacity:.8"></div>
<div class="r" style="left:143.78px;top:298.00px;width:3.17px;height:1px;background:repeating-linear-gradient(90deg,#6e738d 0 1.1px,transparent 1.1px 2.19px);opacity:.8"></div>
<div class="r" style="left:144.08px;top:254.10px;width:1.10px;height:1.20px;background:#c07888;"></div>
<div class="r" style="left:144.08px;top:256.10px;width:1.10px;height:1.20px;background:#c07888;"></div>
<div class="r" style="left:144.08px;top:258.10px;width:1.10px;height:1.20px;background:#c07888;"></div>
<div class="r" style="left:144.08px;top:260.10px;width:1.10px;height:1.20px;background:#c07888;"></div>
<div class="r" style="left:145.88px;top:254.10px;width:1.10px;height:1.20px;background:#c07888;"></div>
<div class="r" style="left:145.88px;top:256.10px;width:1.10px;height:1.20px;background:#c07888;"></div>
<div class="r" style="left:145.88px;top:258.10px;width:1.10px;height:1.20px;background:#c07888;"></div>
<div class="r" style="left:145.88px;top:260.10px;width:1.10px;height:1.20px;background:#c07888;"></div>
<div class="r" style="left:144.08px;top:264.10px;width:1.10px;height:1.20px;background:#c07888;"></div>
<div class="r" style="left:144.08px;top:266.10px;width:1.10px;height:1.20px;background:#c07888;"></div>
<div class="r" style="left:144.08px;top:268.10px;width:1.10px;height:1.20px;background:#c07888;"></div>
<div class="r" style="left:144.08px;top:270.10px;width:1.10px;height:1.20px;background:#c07888;"></div>
<div class="r" style="left:145.88px;top:264.10px;width:1.10px;height:1.20px;background:#c07888;"></div>
<div class="r" style="left:145.88px;top:266.10px;width:1.10px;height:1.20px;background:#c07888;"></div>
<div class="r" style="left:145.88px;top:268.10px;width:1.10px;height:1.20px;background:#c07888;"></div>
<div class="r" style="left:145.88px;top:270.10px;width:1.10px;height:1.20px;background:#c07888;"></div>
<div class="r" style="left:144.08px;top:314.10px;width:1.10px;height:1.20px;background:#7890c8;"></div>
<div class="r" style="left:144.08px;top:316.10px;width:1.10px;height:1.20px;background:#7890c8;"></div>
<div class="r" style="left:144.08px;top:318.10px;width:1.10px;height:1.20px;background:#7890c8;"></div>
<div class="r" style="left:144.08px;top:320.10px;width:1.10px;height:1.20px;background:#7890c8;"></div>
<div class="r" style="left:145.88px;top:314.10px;width:1.10px;height:1.20px;background:#7890c8;"></div>
<div class="r" style="left:145.88px;top:316.10px;width:1.10px;height:1.20px;background:#7890c8;"></div>
<div class="r" style="left:145.88px;top:318.10px;width:1.10px;height:1.20px;background:#7890c8;"></div>
<div class="r" style="left:145.88px;top:320.10px;width:1.10px;height:1.20px;background:#7890c8;"></div>
<div class="r" style="left:144.08px;top:324.10px;width:1.10px;height:1.20px;background:#7890c8;"></div>
<div class="r" style="left:144.08px;top:326.10px;width:1.10px;height:1.20px;background:#7890c8;"></div>
<div class="r" style="left:144.08px;top:328.10px;width:1.10px;height:1.20px;background:#7890c8;"></div>
<div class="r" style="left:144.08px;top:330.10px;width:1.10px;height:1.20px;background:#7890c8;"></div>
<div class="r" style="left:145.88px;top:324.10px;width:1.10px;height:1.20px;background:#7890c8;"></div>
<div class="r" style="left:145.88px;top:326.10px;width:1.10px;height:1.20px;background:#7890c8;"></div>
<div class="r" style="left:145.88px;top:328.10px;width:1.10px;height:1.20px;background:#7890c8;"></div>
<div class="r" style="left:145.88px;top:330.10px;width:1.10px;height:1.20px;background:#7890c8;"></div>
<div class="r" style="left:773.57px;top:212.90px;width:3.80px;height:9.40px;background:#c0c6ea;"></div>
<div class="r" style="left:149.00px;top:61.00px;width:501.50px;height:377.50px;background:#24273a;box-sizing:border-box;border:1px solid #b4b8d0;"></div>
<div class="r" style="left:167.55px;top:90.80px;width:236.25px;height:20.00px;background:#a2d58f;"></div>
<div class="r" style="left:167.55px;top:90.80px;width:17.50px;height:260.00px;background:#a2d58f;"></div>
<div class="r" style="left:386.30px;top:90.80px;width:17.50px;height:260.00px;background:#a2d58f;"></div>
<div class="r" style="left:167.55px;top:330.80px;width:126.88px;height:20.00px;background:#a2d58f;"></div>
<div class="r" style="left:316.30px;top:330.80px;width:87.50px;height:20.00px;background:#a2d58f;"></div>
<div class="r" style="left:276.93px;top:110.80px;width:17.50px;height:20.00px;background:#a2d58f;"></div>
<div class="r" style="left:202.55px;top:130.80px;width:91.88px;height:20.00px;background:#a2d58f;"></div>
<div class="r" style="left:202.55px;top:130.80px;width:17.50px;height:180.00px;background:#a2d58f;"></div>
<div class="r" style="left:202.55px;top:290.80px;width:166.25px;height:20.00px;background:#a2d58f;"></div>
<div class="r" style="left:185.05px;top:210.80px;width:17.50px;height:20.00px;background:#a2d58f;"></div>
<div class="r" style="left:333.80px;top:130.80px;width:35.00px;height:20.00px;background:#a2d58f;"></div>
<div class="r" style="left:351.30px;top:130.80px;width:17.50px;height:180.00px;background:#a2d58f;"></div>
<div class="r" style="left:276.93px;top:310.80px;width:17.50px;height:20.00px;background:#a2d58f;"></div>
<div class="r" style="left:158.80px;top:360.80px;width:4.38px;height:10.00px;background:transparent;box-sizing:border-box;border:1px solid #c8ccdc;"></div>
<div class="h" style="left:431.74px;top:85.30px;width:98.94px;background:#5b6078"></div>
<div class="h" style="left:565.67px;top:85.30px;width:72.69px;background:#5b6078"></div>
<div class="h" style="left:440.49px;top:105.30px;width:2.69px;background:#809a78"></div>
<div class="h" style="left:440.49px;top:115.30px;width:2.69px;background:#809a78"></div>
<div class="h" style="left:440.49px;top:125.30px;width:2.69px;background:#809a78"></div>
<div class="h" style="left:440.49px;top:135.30px;width:2.69px;background:#809a78"></div>
<div class="h" style="left:440.49px;top:145.30px;width:2.69px;background:#809a78"></div>
<div class="h" style="left:431.74px;top:155.30px;width:2.69px;background:#809a78"></div>
<div class="h" style="left:440.49px;top:155.30px;width:2.69px;background:#809a78"></div>
<div class="h" style="left:431.74px;top:165.30px;width:206.62px;background:#5b6078"></div>
<div class="h" style="left:431.74px;top:185.30px;width:98.94px;background:#5b6078"></div>
<div class="h" style="left:565.67px;top:185.30px;width:72.69px;background:#5b6078"></div>
<div class="h" style="left:440.49px;top:205.30px;width:2.69px;background:#7584ad"></div>
<div class="h" style="left:440.49px;top:215.30px;width:2.69px;background:#7584ad"></div>
<div class="h" style="left:440.49px;top:225.30px;width:2.69px;background:#7584ad"></div>
<div class="h" style="left:440.49px;top:235.30px;width:2.69px;background:#7584ad"></div>
<div class="h" style="left:440.49px;top:245.30px;width:2.69px;background:#7584ad"></div>
<div class="h" style="left:440.49px;top:255.30px;width:2.69px;background:#7584ad"></div>
<div class="h" style="left:431.74px;top:265.30px;width:2.69px;background:#7584ad"></div>
<div class="h" style="left:440.49px;top:265.30px;width:2.69px;background:#7584ad"></div>
<div class="h" style="left:431.74px;top:275.30px;width:206.62px;background:#5b6078"></div>
<div class="h" style="left:431.74px;top:295.30px;width:90.19px;background:#5b6078"></div>
<div class="h" style="left:574.42px;top:295.30px;width:63.94px;background:#5b6078"></div>
<div class="h" style="left:431.74px;top:325.30px;width:206.62px;background:#5b6078"></div>
<div class="v" style="left:431.74px;top:85.30px;height:5.50px;background:#5b6078"></div>
<div class="v" style="left:431.74px;top:160.80px;height:5.50px;background:#5b6078"></div>
<div class="v" style="left:431.74px;top:185.30px;height:5.50px;background:#5b6078"></div>
<div class="v" style="left:431.74px;top:270.80px;height:5.50px;background:#5b6078"></div>
<div class="v" style="left:431.74px;top:295.30px;height:5.50px;background:#5b6078"></div>
<div class="v" style="left:431.74px;top:320.80px;height:5.50px;background:#5b6078"></div>
<div class="v" style="left:637.36px;top:85.30px;height:5.50px;background:#5b6078"></div>
<div class="v" style="left:637.36px;top:160.80px;height:5.50px;background:#5b6078"></div>
<div class="v" style="left:637.36px;top:185.30px;height:5.50px;background:#5b6078"></div>
<div class="v" style="left:637.36px;top:270.80px;height:5.50px;background:#5b6078"></div>
<div class="v" style="left:637.36px;top:295.30px;height:5.50px;background:#5b6078"></div>
<div class="v" style="left:637.36px;top:320.80px;height:5.50px;background:#5b6078"></div>
<div class="v" style="left:431.74px;top:100.80px;height:55.50px;background:#809a78"></div>
<div class="v" style="left:440.49px;top:100.80px;height:55.50px;background:#809a78"></div>
<div class="v" style="left:431.74px;top:200.80px;height:65.50px;background:#7584ad"></div>
<div class="v" style="left:440.49px;top:200.80px;height:65.50px;background:#7584ad"></div>
<div class="t" style="left:530.67px;top:82.40px;color:#5b6078">Hardware</div>
<div class="t" style="left:438.80px;top:92.40px;color:#a6da95">PC</div>
<div class="t" style="left:447.55px;top:92.40px;color:#cad3f5">:</div>
<div class="t" style="left:456.30px;top:92.40px;color:#cad3f5">MacBookPro15,2 (1.0)</div>
<div class="t" style="left:456.30px;top:102.40px;color:#cad3f5">Intel(R) Core(TM) i7-8569U (8) @ 4.70 GHz</div>
<div class="t" style="left:456.30px;top:112.40px;color:#cad3f5">Intel Iris Plus Graphics 655 @ 1.20 GHz []</div>
<div class="t" style="left:456.30px;top:122.40px;color:#cad3f5">2560x1600 @ 2x in 13&quot;, 60 Hz [Built-in]</div>
<div class="t" style="left:447.55px;top:132.40px;color:#cad3f5">:</div>
<div class="t" style="left:456.30px;top:132.40px;color:#cad3f5">10.13 GiB / 231.74 GiB (</div>
<div class="t" style="left:561.30px;top:132.40px;color:#a6da95">4%</div>
<div class="t" style="left:570.05px;top:132.40px;color:#cad3f5">) - btrfs</div>
<div class="t" style="left:456.30px;top:142.40px;color:#cad3f5">1.81 GiB / 15.47 GiB (</div>
<div class="t" style="left:552.55px;top:142.40px;color:#a6da95">12%</div>
<div class="t" style="left:565.67px;top:142.40px;color:#cad3f5">)</div>
<div class="t" style="left:451.93px;top:152.40px;color:#cad3f5">: 0 B / 4.00 GiB (</div>
<div class="t" style="left:530.67px;top:152.40px;color:#a6da95">0%</div>
<div class="t" style="left:539.42px;top:152.40px;color:#cad3f5">)</div>
<div class="t" style="left:530.67px;top:182.40px;color:#5b6078">Software</div>
<div class="t" style="left:438.80px;top:192.40px;color:#8aadf4">OS</div>
<div class="t" style="left:447.55px;top:192.40px;color:#cad3f5">:</div>
<div class="t" style="left:456.30px;top:192.40px;color:#cad3f5">Omarchy v3.0.0</div>
<div class="t" style="left:447.55px;top:202.40px;color:#cad3f5">:</div>
<div class="t" style="left:456.30px;top:202.40px;color:#cad3f5">master</div>
<div class="t" style="left:456.30px;top:212.40px;color:#cad3f5">Linux 6.16.1-arch1-Watanare-T2-1-t2</div>
<div class="t" style="left:456.30px;top:222.40px;color:#cad3f5">Hyprland 0.51.0 (Wayland)</div>
<div class="t" style="left:456.30px;top:232.40px;color:#cad3f5">alacritty 0.15.1</div>
<div class="t" style="left:456.30px;top:242.40px;color:#cad3f5">872 (pacman)</div>
<div class="t" style="left:456.30px;top:252.40px;color:#cad3f5">Catppuccin</div>
<div class="t" style="left:447.55px;top:262.40px;color:#cad3f5">:</div>
<div class="t" style="left:456.30px;top:262.40px;color:#cad3f5">alacritty (9pt)</div>
<div class="t" style="left:521.92px;top:292.40px;color:#5b6078">Uptime / Age</div>
<div class="t b" style="left:438.80px;top:302.40px;color:#f5bde6">OS Age</div>
<div class="t" style="left:465.05px;top:302.40px;color:#cad3f5">: 0 days</div>
<div class="t b" style="left:438.80px;top:312.40px;color:#f5bde6">Uptime</div>
<div class="t" style="left:465.05px;top:312.40px;color:#cad3f5">: 5 mins</div>
<div class="r" style="left:505.03px;top:255.40px;width:3.10px;height:3.10px;background:#cad3f5;border-radius:50%;"></div>
<div class="r" style="left:509.40px;top:255.40px;width:3.10px;height:3.10px;background:#b7bdf8;border-radius:50%;"></div>
<div class="r" style="left:513.77px;top:255.40px;width:3.10px;height:3.10px;background:#8bd5ca;border-radius:50%;"></div>
<div class="r" style="left:518.15px;top:255.40px;width:3.10px;height:3.10px;background:#f5bde6;border-radius:50%;"></div>
<div class="r" style="left:522.52px;top:255.40px;width:3.10px;height:3.10px;background:#8aadf4;border-radius:50%;"></div>
<div class="r" style="left:526.90px;top:255.40px;width:3.10px;height:3.10px;background:#eed49f;border-radius:50%;"></div>
<div class="r" style="left:531.27px;top:255.40px;width:3.10px;height:3.10px;background:#a6da95;border-radius:50%;"></div>
<div class="r" style="left:535.65px;top:255.40px;width:3.10px;height:3.10px;background:#ed8796;border-radius:50%;"></div>
<svg class="r" style="left:0;top:0" width="800" height="500" viewBox="0 0 800 500"><path d="M703.2 5.2 H700.6 V10.8 H703.2" fill="none" stroke="#d8dcf0" stroke-width="1.3"/><path d="M702.4 8 H705.2 M704.6 6.3 L707.4 8 L704.6 9.7 Z" fill="#d8dcf0" stroke="#d8dcf0" stroke-width="1.3"/><path d="M721.7 5 V11 M720.4 6.6 L723 9.4 L721.7 10.8 M720.4 9.4 L723 6.6 L721.7 5.2" fill="none" stroke="#d8dcf0" stroke-width="1"/><path d="M735.6 5.8 H743.2 L739.4 10.4 Z" fill="none" stroke="#d8dcf0" stroke-width="1.1"/><path d="M737.6 8.3 H741.2 L739.4 10.4 Z" fill="#d8dcf0"/><path d="M751.8 6.7 H753.4 L756.2 4.8 V11.2 L753.4 9.3 H751.8 Z" fill="#d8dcf0"/><path d="M757.6 6.6 Q758.6 8 757.6 9.4" fill="none" stroke="#d8dcf0" stroke-width="0.9"/><circle cx="770.9" cy="8" r="2.6" fill="none" stroke="#d8dcf0" stroke-width="1.1"/><circle cx="770.9" cy="8" r="0.9" fill="#d8dcf0"/><rect x="784.8" y="5.6" width="4.2" height="5.6" rx="0.6" fill="#d8dcf0"/><rect x="786" y="4.8" width="1.8" height="1" fill="#d8dcf0"/><path d="M594.6 35.6 H599 L596.8 39.6 Z" fill="#d8dcf0"/><path d="M775.36 204.2 V210.6 M773.36 206.2 L775.36 204 L777.36 206.2" fill="none" stroke="#d0d4ec" stroke-width="1.1"/><path d="M775.36 464.4 V470.8 M773.36 468.6 L775.36 470.8 L777.36 468.6" fill="none" stroke="#d0d4ec" stroke-width="1.1"/><rect x="431.2" y="93.9" width="5.8" height="4.4" fill="none" stroke="#b6dca8" stroke-width="1"/><rect x="430.2" y="98.6" width="8.4" height="1.4" fill="#b6dca8"/><rect x="444.6" y="104.4" width="4.6" height="4.8" fill="none" stroke="#a6da95" stroke-width="1"/><rect x="446.1" y="106" width="1.6" height="1.6" fill="#a6da95"/><path d="M443.2 105.6 H444.6 M443.2 108 H444.6 M449.2 105.6 H450.6 M449.2 108 H450.6 M446 103 V104.4 M447.8 103 V104.4 M446 109.2 V110.4 M447.8 109.2 V110.4" stroke="#a6da95" stroke-width="0.9"/><rect x="444.6" y="113.2" width="4.4" height="7" fill="#a6da95"/><path d="M443.2 114.8 H444.6 M443.2 118.6 H444.6 M449 114.8 H450.6 M449 118.6 H450.6" stroke="#a6da95" stroke-width="1"/><rect x="443.8" y="123.8" width="6.2" height="4.8" fill="none" stroke="#b6dca8" stroke-width="1"/><path d="M446.9 128.6 V130 M445.2 130.3 H448.6" stroke="#b6dca8" stroke-width="0.9"/><rect x="443.2" y="133.6" width="4.8" height="6.2" rx="0.8" fill="none" stroke="#a6da95" stroke-width="1"/><circle cx="445.6" cy="136.2" r="1" fill="none" stroke="#a6da95" stroke-width="0.7"/><circle cx="445.6" cy="138.6" r="0.5" fill="#a6da95"/><rect x="442.8" y="144" width="8" height="4.7" fill="#a6da95"/><rect x="442.8" y="146.1" width="8" height="0.7" fill="#24273a"/><path d="M444.6 154.2 H450.4 M443.6 157.4 H449.4 M448.6 153 L450.4 154.2 L448.6 155.4 M445.4 156.2 L443.6 157.4 L445.4 158.6" fill="none" stroke="#b6dca8" stroke-width="0.9"/><rect x="431" y="192.2" width="6.2" height="6.8" fill="none" stroke="#8aadf4" stroke-width="1.8"/><path d="M444 203.4 V210 M444 209 Q448.6 208.4 448.6 204.4" fill="none" stroke="#8aadf4" stroke-width="0.9"/><circle cx="444" cy="203.6" r="0.8" fill="#8aadf4"/><circle cx="448.6" cy="204.2" r="0.8" fill="#8aadf4"/><path d="M446.8 212.4 L447.9 214.3 L450.1 214.1 L449.1 216.1 L450.1 218.1 L447.9 217.9 L446.8 219.8 L445.7 217.9 L443.5 218.1 L444.5 216.1 L443.5 214.1 L445.7 214.3 Z" fill="#8aadf4"/><circle cx="446.8" cy="216.1" r="1" fill="#24273a"/><rect x="443.5" y="223.4" width="6.8" height="6.4" rx="0.6" fill="none" stroke="#8aadf4" stroke-width="1"/><path d="M443.5 225.4 H450.3" stroke="#8aadf4" stroke-width="0.9"/><rect x="443.5" y="233.5" width="6.8" height="6" rx="0.6" fill="none" stroke="#8aadf4" stroke-width="1"/><path d="M444.8 235 L446.2 236.4 L444.8 237.8 M446.8 238.2 H449" fill="none" stroke="#8aadf4" stroke-width="0.8"/><path d="M446.8 243.2 L450 244.8 V248.6 L446.8 250.2 L443.6 248.6 V244.8 Z M443.6 244.8 L446.8 246.4 L450 244.8 M446.8 246.4 V250.2" fill="none" stroke="#8aadf4" stroke-width="0.9"/><path d="M447 253.4 A3.4 3.4 0 1 0 447.6 260 Q446 258.4 448 257.4 Q450 257 450.3 256 A3.4 3.4 0 0 0 447 253.4 Z" fill="none" stroke="#8aadf4" stroke-width="0.9"/><circle cx="445.2" cy="255.6" r="0.6" fill="#8aadf4"/><circle cx="447.6" cy="255" r="0.6" fill="#8aadf4"/><circle cx="444.8" cy="258" r="0.6" fill="#8aadf4"/><path d="M443.6 270.2 L446.4 263.4 L449.2 270.2 M444.7 267.8 H448.1" fill="none" stroke="#8aadf4" stroke-width="1.1"/><path d="M430.4 303.3 H434.2 M430.4 309.6 H434.2 M430.9 303.6 L433.7 309.3 M433.7 303.6 L430.9 309.3" fill="none" stroke="#ecc2e2" stroke-width="1.1"/><circle cx="432.8" cy="316.2" r="3.1" fill="#ecc2e2"/><path d="M432.6 314 V316.4 L434 317.8" fill="none" stroke="#24273a" stroke-width="0.8"/></svg>
</body></html>
